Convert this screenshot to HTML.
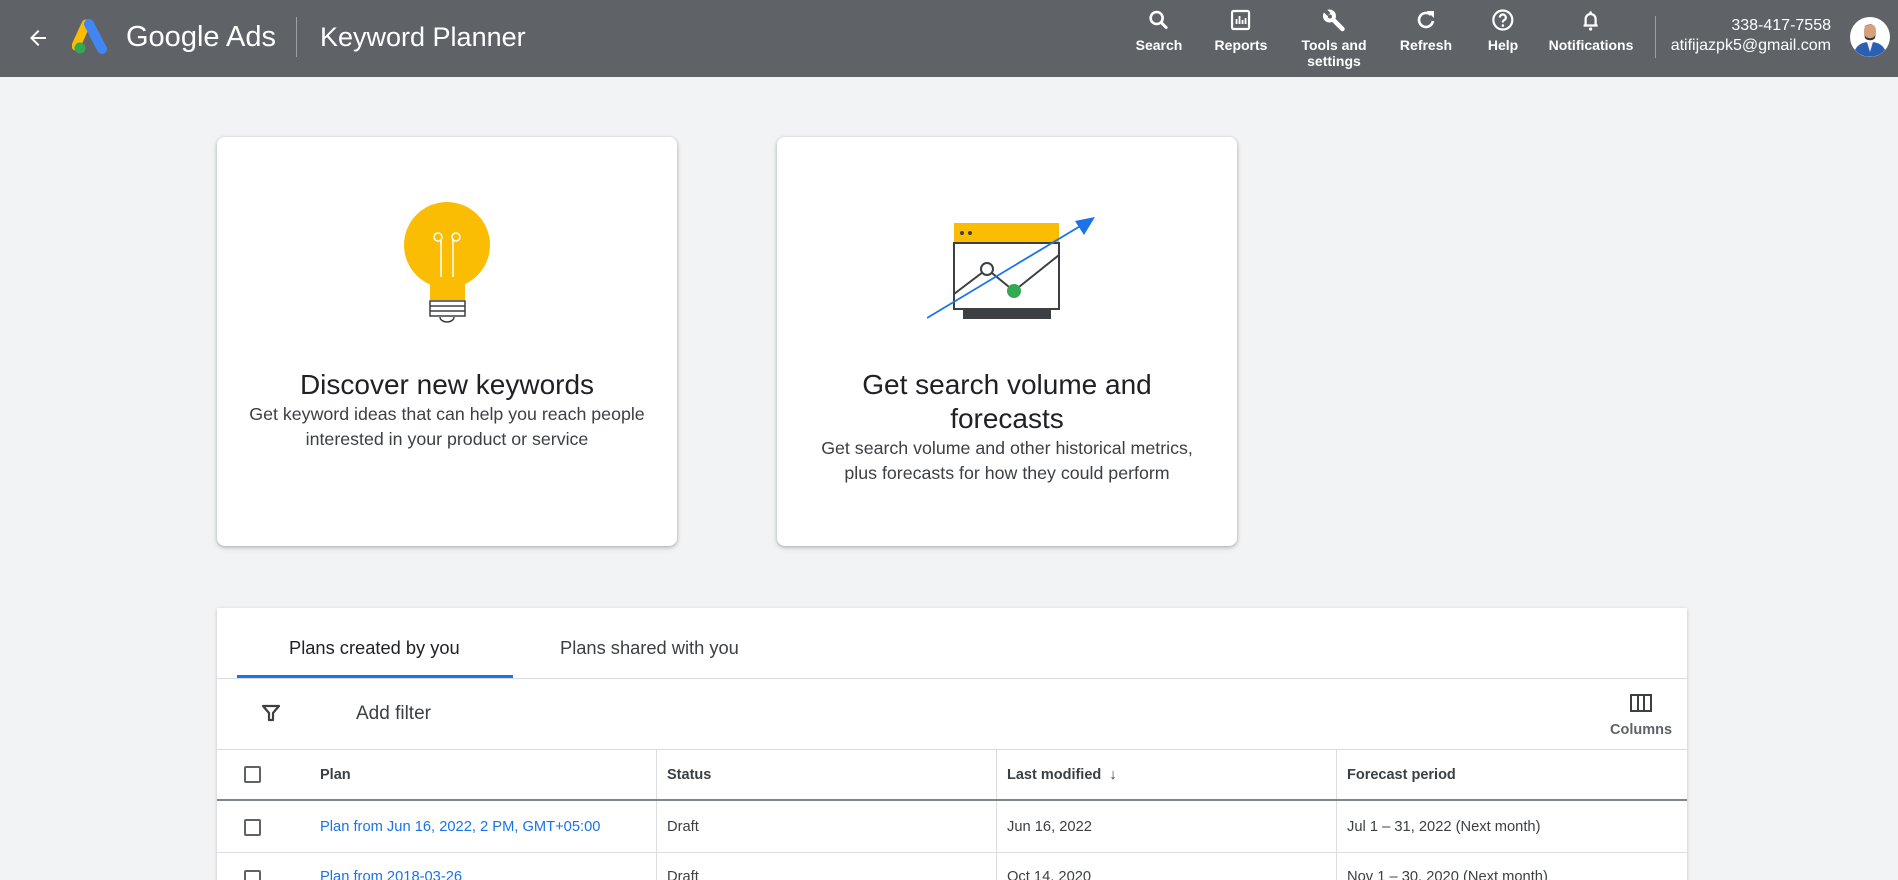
<!DOCTYPE html>
<html><head><meta charset="utf-8"><style>
*{margin:0;padding:0;box-sizing:border-box}
html,body{width:1898px;height:880px;overflow:hidden}
body{background:#f1f3f4;font-family:"Liberation Sans",Arial,sans-serif;position:relative}
.hdr{position:absolute;left:0;top:0;width:1898px;height:77px;background:#5f6368;color:#fff}
.abs{position:absolute}
.nav{position:absolute;top:8px;text-align:center;font-weight:bold;font-size:14px;line-height:16px;color:#fff;transform:translateX(-50%)}
.nav svg{display:block;margin:0 auto 5px}
.card{position:absolute;top:137px;width:460px;height:409px;background:#fff;border-radius:8px;box-shadow:0 1px 3px rgba(60,64,67,.3),0 2px 6px rgba(60,64,67,.15);text-align:center}
.ct{position:absolute;left:0;right:0;font-size:28px;color:#202124;line-height:34px}
.cd{position:absolute;left:0;right:0;font-size:17.8px;color:#3c4043;line-height:25px}
.panel{position:absolute;left:217px;top:608px;width:1470px;height:272px;background:#fff;box-shadow:0 1px 3px rgba(60,64,67,.3)}
.t{position:absolute;font-size:14.7px;color:#3c4043}
.hline{position:absolute;left:0;width:1470px;height:1px;background:#dadce0}
.vline{position:absolute;width:1px;background:#dadce0;top:141px;height:140px}
.cb{position:absolute;left:27px;width:17px;height:17px;border:2px solid #5f6368;border-radius:2px}
a{color:#1a73e8;text-decoration:none}
</style></head><body>
<div class="hdr">
<svg class="abs" style="left:26px;top:26px" width="24" height="24" viewBox="0 0 24 24"><path d="M20 11H7.8l5.6-5.6L12 4l-8 8 8 8 1.4-1.4L7.8 13H20z" fill="#fff"/></svg>
<svg class="abs" style="left:72px;top:18px" width="40" height="38" viewBox="0 0 40 38"><path d="M14 6 L4 28" stroke="#fbbc04" stroke-width="9" stroke-linecap="round"/><path d="M17 6 L30 31" stroke="#4285f4" stroke-width="10" stroke-linecap="round"/><circle cx="8" cy="30" r="5.5" fill="#34a853"/></svg>
<div class="abs" style="left:126px;top:20px;font-size:29px;line-height:34px">Google Ads</div>
<div class="abs" style="left:296px;top:17px;width:1px;height:40px;background:#9aa0a6"></div>
<div class="abs" style="left:320px;top:21px;font-size:27px;line-height:32px">Keyword Planner</div>
<div class="nav" style="left:1159px"><svg width="26" height="24" viewBox="0 0 24 24"><circle cx="10" cy="10" r="6" stroke="#fff" stroke-width="2.6" fill="none"/><path d="M14.5 14.5l5 5" stroke="#fff" stroke-width="3" stroke-linecap="round"/></svg>Search</div>
<div class="nav" style="left:1241px"><svg width="26" height="24" viewBox="0 0 24 24"><rect x="3.5" y="3" width="17" height="18" rx="1.5" stroke="#fff" stroke-width="2.2" fill="none"/><path d="M8 16V11M11 16V8M14 16V12M17 16V10" stroke="#fff" stroke-width="1.8"/></svg>Reports</div>
<div class="nav" style="left:1334px"><svg width="26" height="24" viewBox="0 0 26 24"><path d="M10 10L21 21" stroke="#fff" stroke-width="4.5" stroke-linecap="round"/><circle cx="8" cy="8" r="6.5" fill="#fff"/><path d="M2 4L6 8L9 5L5 1z" fill="#5f6368"/><circle cx="8.5" cy="8.5" r="2" fill="#5f6368"/></svg>Tools and<br>settings</div>
<div class="nav" style="left:1426px"><svg width="26" height="24" viewBox="0 0 24 24"><path d="M17 7a7 7 0 1 0 2 6" stroke="#fff" stroke-width="2.6" fill="none"/><path d="M13 3h7v7z" fill="#fff"/></svg>Refresh</div>
<div class="nav" style="left:1503px"><svg width="26" height="24" viewBox="0 0 24 24"><circle cx="12" cy="12" r="9.5" stroke="#fff" stroke-width="2.2" fill="none"/><path d="M9 9.5a3 3 0 1 1 4 2.8c-1 .5-1 1.2-1 2.2" stroke="#fff" stroke-width="2.2" fill="none"/><circle cx="12" cy="17.5" r="1.3" fill="#fff"/></svg>Help</div>
<div class="nav" style="left:1591px"><svg width="26" height="24" viewBox="0 0 24 24"><path d="M7 17V11a5 5 0 0 1 10 0v6" stroke="#fff" stroke-width="2.2" fill="none"/><path d="M5 17.5h14" stroke="#fff" stroke-width="2.2"/><circle cx="12" cy="21" r="1.6" fill="#fff"/><circle cx="12" cy="4.5" r="1.3" fill="#fff"/></svg>Notifications</div>
<div class="abs" style="left:1655px;top:16px;width:1px;height:42px;background:#9aa0a6"></div>
<div class="abs" style="right:67px;top:16px;font-size:16px;line-height:20px;text-align:right">338-417-7558<br>atifijazpk5@gmail.com</div>
<svg class="abs" style="left:1849px;top:16px" width="42" height="42" viewBox="0 0 42 42"><circle cx="21" cy="21" r="20" fill="#fff"/><path d="M6 34c3-6 8-8 15-8s12 2 15 8a20 20 0 0 1-30 0z" fill="#2b5fb3"/><path d="M18 26l3 10 3-10z" fill="#f2f2f2"/><ellipse cx="21" cy="16" rx="6" ry="8" fill="#d8a07a"/><path d="M15 14c0-7 12-8 12 0l-1-4c-3-2-7-2-10 0z" fill="#222"/><path d="M15 17c1 7 11 7 12 0l-1 5c-2 3-8 3-10 0z" fill="#333"/></svg>
</div>

<div class="card" style="left:217px">
<svg class="abs" style="left:180px;top:60px" width="100" height="130" viewBox="0 0 100 130"><circle cx="50" cy="48" r="43" fill="#fbbc04"/><rect x="33" y="70" width="35" height="33" fill="#fbbc04"/><path d="M44 42v38M56 42v38" stroke="#fff" stroke-width="1.5"/><circle cx="41" cy="40" r="4" stroke="#fff" stroke-width="1.5" fill="none"/><circle cx="59" cy="40" r="4" stroke="#fff" stroke-width="1.5" fill="none"/><rect x="33" y="104" width="35" height="15" fill="#fff" stroke="#3c4043" stroke-width="1.5"/><path d="M33 109h35M33 114h35" stroke="#3c4043" stroke-width="1.5"/><path d="M43 120a7 5 0 0 0 14 0" stroke="#3c4043" stroke-width="1.5" fill="none"/></svg>
<div class="ct" style="top:231px">Discover new keywords</div>
<div class="cd" style="top:265px">Get keyword ideas that can help you reach people<br>interested in your product or service</div>
</div>

<div class="card" style="left:777px">
<svg class="abs" style="left:150px;top:77px" width="172" height="106" viewBox="0 0 172 106"><rect x="27" y="9" width="105" height="20" fill="#fbbc04"/><circle cx="35" cy="19" r="2" fill="#3c4043"/><circle cx="43" cy="19" r="2" fill="#3c4043"/><rect x="27" y="29" width="105" height="66" fill="none" stroke="#3c4043" stroke-width="2"/><rect x="36" y="96" width="88" height="9" fill="#3c4043"/><path d="M27 80L60 55L87 77L132 41" stroke="#3c4043" stroke-width="2" fill="none"/><path d="M0 104L160 8" stroke="#1a73e8" stroke-width="1.8"/><path d="M168 3l-20 4 9 14z" fill="#1a73e8"/><circle cx="60" cy="55" r="6" fill="#fff" stroke="#3c4043" stroke-width="2"/><circle cx="87" cy="77" r="7" fill="#34a853"/></svg>
<div class="ct" style="top:231px">Get search volume and<br>forecasts</div>
<div class="cd" style="top:299px">Get search volume and other historical metrics,<br>plus forecasts for how they could perform</div>
</div>

<div class="panel">
<div class="t" style="left:72px;top:29px;font-size:18.3px;color:#202124">Plans created by you</div>
<div class="t" style="left:343px;top:29px;font-size:18.3px">Plans shared with you</div>
<div class="abs" style="left:20px;top:67px;width:276px;height:3px;background:#1a73e8"></div>
<div class="hline" style="top:70px"></div>
<svg class="abs" style="left:44px;top:95px" width="20" height="20" viewBox="0 0 20 20"><path d="M2 3h16l-6 7v7h-4v-7z" fill="none" stroke="#3c4043" stroke-width="2.2" stroke-linejoin="round"/></svg>
<div class="t" style="left:139px;top:95px;font-size:19px">Add filter</div>
<svg class="abs" style="left:1413px;top:86px" width="22" height="18" viewBox="0 0 22 18"><rect x="1" y="1" width="20" height="16" fill="none" stroke="#3c4043" stroke-width="2"/><path d="M8 1v16M14 1v16" stroke="#3c4043" stroke-width="2"/></svg>
<div class="t" style="left:1393px;top:114px;font-size:14.5px;font-weight:bold;color:#5f6368">Columns</div>
<div class="hline" style="top:141px"></div>
<div class="vline" style="left:439px"></div><div class="vline" style="left:779px"></div><div class="vline" style="left:1119px"></div>
<div class="cb" style="top:158px"></div>
<div class="t" style="left:103px;top:159px;font-size:14.5px;font-weight:bold">Plan</div>
<div class="t" style="left:450px;top:159px;font-size:14.5px;font-weight:bold">Status</div>
<div class="t" style="left:790px;top:159px;font-size:14.5px;font-weight:bold">Last modified &nbsp;<span style="font-weight:normal">↓</span></div>
<div class="t" style="left:1130px;top:159px;font-size:14.5px;font-weight:bold">Forecast period</div>
<div class="abs" style="left:0;top:191px;width:1470px;height:2px;background:#80868b"></div>
<div class="cb" style="top:211px"></div>
<div class="t" style="left:103px;top:211px"><a>Plan from Jun 16, 2022, 2 PM, GMT+05:00</a></div>
<div class="t" style="left:450px;top:211px">Draft</div>
<div class="t" style="left:790px;top:211px">Jun 16, 2022</div>
<div class="t" style="left:1130px;top:211px">Jul 1 – 31, 2022 (Next month)</div>
<div class="hline" style="top:244px"></div>
<div class="cb" style="top:262px"></div>
<div class="t" style="left:103px;top:261px"><a>Plan from 2018-03-26</a></div>
<div class="t" style="left:450px;top:261px">Draft</div>
<div class="t" style="left:790px;top:261px">Oct 14, 2020</div>
<div class="t" style="left:1130px;top:261px">Nov 1 – 30, 2020 (Next month)</div>
</div>
</body></html>
